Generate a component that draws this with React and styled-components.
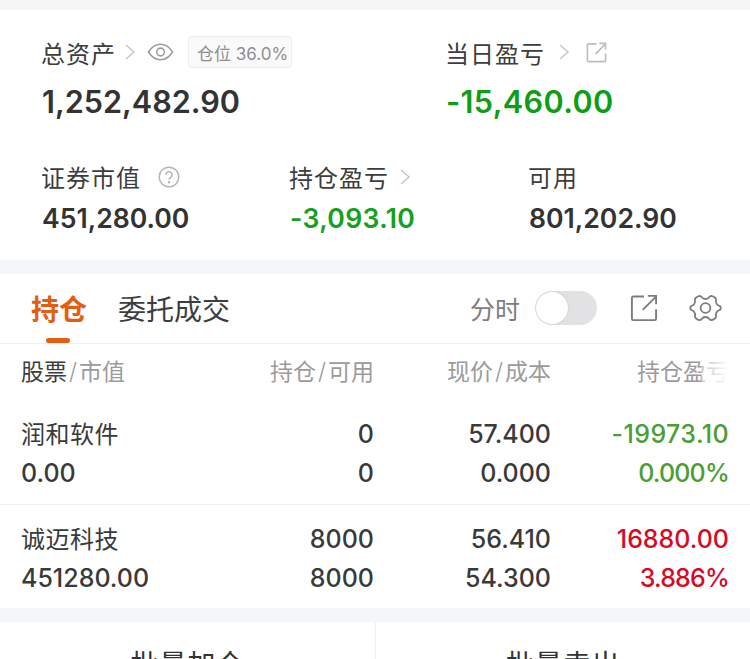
import styled, { createGlobalStyle } from "styled-components";

const FONT = `Inter, "Noto Sans CJK SC", sans-serif`;

const GlobalStyle = createGlobalStyle`
  html, body {
    margin: 0;
    padding: 0;
    height: 659px;
    overflow: hidden;
    background: #f5f6f8;
    font-family: ${FONT};
  }
`;

const Page = styled.div`
  width: 750px;
  height: 659px;
  overflow: hidden;
  padding-top: 10px;
  box-sizing: border-box;
  display: flex;
  flex-direction: column;
  gap: 14px;
`;

const Card = styled.section`
  background: #fff;
  flex: none;
`;

const Summary = styled(Card)`
  height: 250px;
  box-sizing: border-box;
  padding: 26px 0 0 42px;
`;

const TopRow = styled.div`
  display: grid;
  grid-template-columns: 404px 1fr;
`;

const BottomRow = styled.div`
  display: grid;
  grid-template-columns: 248px 239px 1fr;
  margin-top: 37px;
`;

const Label = styled.div`
  display: flex;
  align-items: center;
  height: 32px;
  margin-left: -1px;
  font-size: 24px;
  letter-spacing: 1px;
  color: #3d3d3d;
`;

const Value = styled.div`
  font-weight: 600;
  font-size: ${(p) => (p.$big ? 30.6 : 26.6)}px;
  line-height: ${(p) => (p.$big ? 42 : 36)}px;
  margin-top: ${(p) => (p.$big ? 13 : 8)}px;
  letter-spacing: ${(p) => (p.$spaced ? "0.35px" : "0")};
  color: ${(p) => (p.$color ? p.$color : "#333")};
`;

const IconSlot = styled.span`
  display: inline-flex;
  margin-left: ${(p) => p.$left}px;
  margin-top: ${(p) => p.$top || 0}px;
`;

const Badge = styled.span`
  display: inline-flex;
  align-items: center;
  height: 30px;
  margin-left: 14px;
  padding: 0 3px 0 8px;
  border: 1px solid #eeeeee;
  border-radius: 4px;
  background: #fafafa;
  font-size: 17px;
  letter-spacing: 0;
  color: #8e8e8e;
`;

const Tabs = styled.div`
  height: 70px;
  box-sizing: border-box;
  display: flex;
  align-items: center;
  border-bottom: 1px solid #f0f0f0;
  padding: 0 28px 2px 31px;
`;

const Tab = styled.div`
  position: relative;
  font-size: 28px;
  margin-right: 31px;
  font-weight: ${(p) => (p.$active ? 600 : 400)};
  color: ${(p) => (p.$active ? "#e35d12" : "#3d3d3d")};
  ${(p) =>
    p.$active &&
    `&::after {
      content: "";
      position: absolute;
      left: 15px;
      bottom: -15px;
      width: 24px;
      height: 5px;
      border-radius: 3px;
      background: #e35d12;
    }`}
`;

const TabTools = styled.div`
  margin-left: auto;
  display: flex;
  align-items: center;
`;

const ToolText = styled.span`
  font-size: 25px;
  color: #7d7d7d;
`;

const Switch = styled.span`
  position: relative;
  width: 62px;
  height: 34px;
  margin: 0 33px 0 15px;
  border-radius: 17px;
  background: #e2e2e4;
  &::after {
    content: "";
    position: absolute;
    left: 1px;
    top: 1px;
    width: 32px;
    height: 32px;
    border-radius: 50%;
    background: #fff;
    box-shadow: 0 0 2px rgba(0, 0, 0, 0.15);
  }
`;

const Grid = `
  display: grid;
  grid-template-columns: 1fr 130px 177px 178px;
  padding: 0 21px;
`;

const Head = styled.div`
  ${Grid}
  height: 56px;
  box-sizing: border-box;
  padding-bottom: 4px;
  align-items: center;
  font-size: 23px;
  color: #9b9b9b;
`;

const HeadCell = styled.div`
  text-align: ${(p) => (p.$left ? "left" : "right")};
  white-space: nowrap;
  position: relative;
`;

const Strong = styled.span`
  color: #3d3d3d;
`;

const Slash = styled.span`
  margin: 0 2px;
  font-weight: 300;
`;

const Fade = styled.span`
  position: absolute;
  right: 0;
  top: 0;
  width: 28px;
  height: 100%;
  background: linear-gradient(to right, rgba(255, 255, 255, 0.4), #fff);
`;

const Row = styled.div`
  ${Grid}
  height: ${(p) => p.$height}px;
  box-sizing: border-box;
  padding-top: ${(p) => p.$top}px;
  grid-auto-rows: 39px;
  align-items: center;
  border-bottom: ${(p) => (p.$line ? "1px solid #f0f0f0" : "none")};
`;

const Cell = styled.div`
  font-size: ${(p) => (p.$name ? 24 : 25)}px;
  letter-spacing: ${(p) => (p.$name ? "0.5px" : p.$spaced ? "0.4px" : p.$tight ? "-0.8px" : "0")};
  font-weight: ${(p) => (p.$name ? 400 : 500)};
  padding-bottom: ${(p) => (p.$name ? 2 : 0)}px;
  text-align: ${(p) => (p.$left ? "left" : "right")};
  color: ${(p) => p.$color || "#3a3a3a"};
`;

const Actions = styled(Card)`
  flex: 1;
  display: grid;
  grid-template-columns: 1fr 1fr;
`;

const Action = styled.div`
  font-size: 28px;
  letter-spacing: 0.5px;
  color: #333;
  text-align: center;
  padding-top: 21px;
  & + & {
    border-left: 1px solid #f0f0f0;
  }
`;

const Chevron = ({ size = 20 }) => (
  <svg width={size * 0.6} height={size} viewBox="0 0 12 20" fill="none" stroke="#c8c8c8" strokeWidth="1.6">
    <path d="M2 3l8 7-8 7" />
  </svg>
);

const Eye = () => (
  <svg width="27" height="20" viewBox="0 0 28 20" fill="none" stroke="#9c9c9c" strokeWidth="1.6">
    <path d="M1.500 10C5 4.500 9 2 14 2s9 2.500 12.500 8C23 15.500 19 18 14 18S5 15.500 1.500 10z" />
    <circle cx="14" cy="10" r="4" />
  </svg>
);

const Share = ({ size = 21, color = "#bdbdbd", width = 1.7 }) => (
  <svg width={size} height={size} viewBox="0 0 22 22" fill="none" stroke={color} strokeWidth={width}>
    <path d="M11 2H2.500A1 1 0 0 0 1.500 3v16.500a1 1 0 0 0 1 1h17a1 1 0 0 0 1-1V12" />
    <path d="M10 12.500L20 2.500M14 1.500h6.500V8" />
  </svg>
);

const Help = () => (
  <svg width="22" height="22" viewBox="0 0 22 22" fill="none" stroke="#b5b5b5" strokeWidth="1.5">
    <circle cx="11" cy="11" r="9.800" />
    <path d="M8 8.800a3 3 0 1 1 4.600 2.500c-1 .7-1.600 1.200-1.600 2.400" />
    <circle cx="11" cy="16.200" r=".5" />
  </svg>
);

const Gear = () => (
  <svg width="33" height="32" viewBox="0 0 34 32" fill="none" stroke="#7d7d7d" strokeWidth="1.9" strokeLinejoin="round">
    <path d="M11 3.500c1 0 1.400.4 2 1.200.9 1.300 2.400 2 4 2s3.100-.7 4-2c.6-.8 1-1.200 2-1.200 1 .2 3 1.200 4 2 .9.8 1 1.400.8 2.400-.4 1.500.1 3 1 4.200.8 1 2 1.500 3 2 .8.400.9 1 .9 1.900s-.1 1.500-.9 1.900c-1 .5-2.200 1-3 2-.9 1.200-1.400 2.700-1 4.200.2 1 .1 1.600-.8 2.400-1 .8-3 1.800-4 2-1 0-1.400-.4-2-1.200-.9-1.300-2.400-2-4-2s-3.100.7-4 2c-.6.800-1 1.200-2 1.200-1-.2-3-1.200-4-2-.9-.8-1-1.400-.8-2.400.4-1.500-.1-3-1-4.200-.8-1-2-1.500-3-2-.8-.4-.9-1-.9-1.900s.1-1.500.9-1.900c1-.5 2.200-1 3-2 .9-1.200 1.400-2.700 1-4.200-.2-1-.1-1.600.8-2.400 1-.8 3-1.800 4-2z" />
    <circle cx="17" cy="16" r="5" />
  </svg>
);

const GREEN = "#0f9d16";
const SOFT_GREEN = "#4a9e32";
const RED = "#d8091f";

const positions = [
  { name: "润和软件", value: "0.00", hold: "0", avail: "0", price: "57.400", cost: "0.000", pl: "-19973.10", rate: "0.000%", color: SOFT_GREEN, top: 14, height: 105, line: true },
  { name: "诚迈科技", value: "451280.00", hold: "8000", avail: "8000", price: "56.410", cost: "54.300", pl: "16880.00", rate: "3.886%", color: RED, top: 14, height: 103 },
];

export default function App() {
  return (
    <Page>
      <GlobalStyle />
      <Summary>
        <TopRow>
          <div>
            <Label>
              总资产
              <IconSlot $left={8}><Chevron /></IconSlot>
              <IconSlot $left={11}><Eye /></IconSlot>
              <Badge>仓位 36.0%</Badge>
            </Label>
            <Value $big>1,252,482.90</Value>
          </div>
          <div>
            <Label>
              当日盈亏
              <IconSlot $left={13}><Chevron /></IconSlot>
              <IconSlot $left={16}><Share /></IconSlot>
            </Label>
            <Value $big $spaced $color={GREEN}>-15,460.00</Value>
          </div>
        </TopRow>
        <BottomRow>
          <div>
            <Label>
              证券市值
              <IconSlot $left={17} $top={2}><Help /></IconSlot>
            </Label>
            <Value>451,280.00</Value>
          </div>
          <div>
            <Label>
              持仓盈亏
              <IconSlot $left={10} $top={2}><Chevron /></IconSlot>
            </Label>
            <Value $spaced $color="#16a020">-3,093.10</Value>
          </div>
          <div>
            <Label>可用</Label>
            <Value>801,202.90</Value>
          </div>
        </BottomRow>
      </Summary>

      <Card>
        <Tabs>
          <Tab $active>持仓</Tab>
          <Tab>委托成交</Tab>
          <TabTools>
            <ToolText>分时</ToolText>
            <Switch />
            <IconSlot $left={0}><Share size={28} color="#7d7d7d" width={1.5} /></IconSlot>
            <IconSlot $left={31}><Gear /></IconSlot>
          </TabTools>
        </Tabs>
        <Head>
          <HeadCell $left><Strong>股票</Strong><Slash>/</Slash>市值</HeadCell>
          <HeadCell>持仓<Slash>/</Slash>可用</HeadCell>
          <HeadCell>现价<Slash>/</Slash>成本</HeadCell>
          <HeadCell>持仓盈亏<Fade /></HeadCell>
        </Head>
        {positions.map((p) => (
          <Row key={p.name} $top={p.top} $height={p.height} $line={p.line}>
            <Cell $left $name>{p.name}</Cell>
            <Cell>{p.hold}</Cell>
            <Cell>{p.price}</Cell>
            <Cell $spaced={p.pl.startsWith("-")} $color={p.color}>{p.pl}</Cell>
            <Cell $left>{p.value}</Cell>
            <Cell>{p.avail}</Cell>
            <Cell>{p.cost}</Cell>
            <Cell $tight $color={p.color}>{p.rate}</Cell>
          </Row>
        ))}
      </Card>

      <Actions>
        <Action>批量加仓</Action>
        <Action>批量卖出</Action>
      </Actions>
    </Page>
  );
}
